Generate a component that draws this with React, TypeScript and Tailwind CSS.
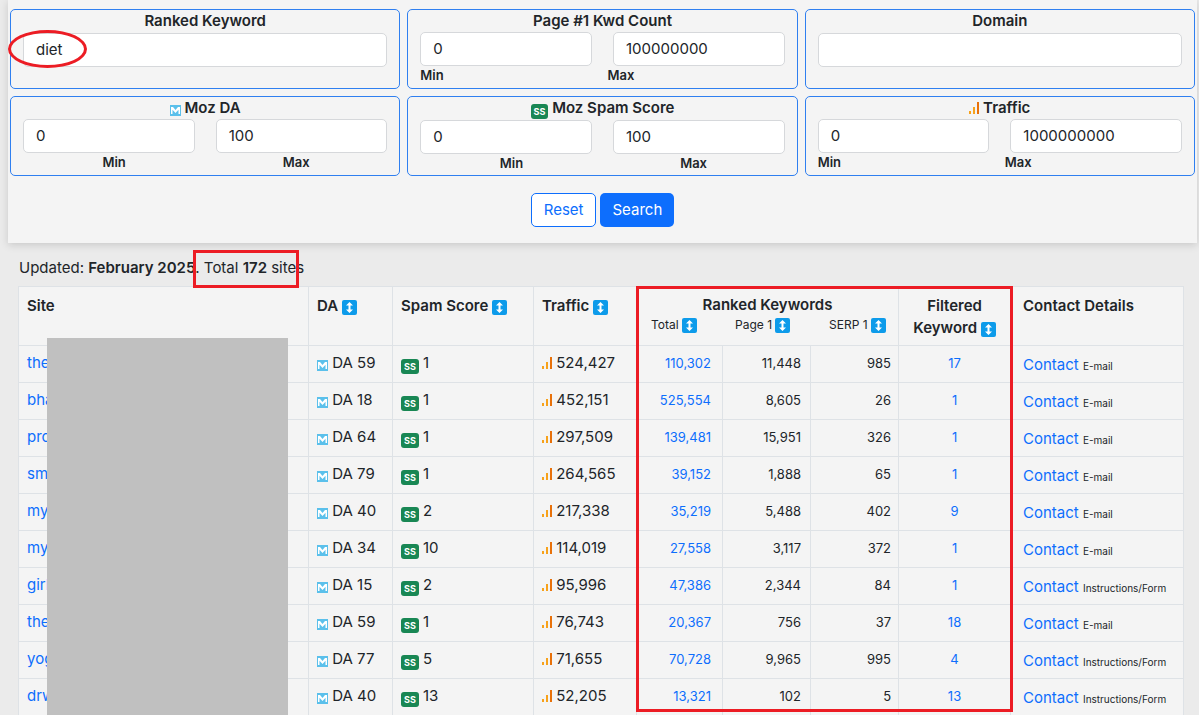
import React from "react";

const Sort = () => (
  <span className="inline-flex h-[15px] w-[15px] items-center justify-center rounded-[2px] bg-[#0d9bea] align-[-2px]">
    <svg width="9" height="11" viewBox="0 0 9 11" fill="white">
      <path d="M4.5 0 L8 3.5 H5.5 V7.5 H8 L4.5 11 L1 7.5 H3.5 V3.5 H1 Z" />
    </svg>
  </span>
);

const MozIcon = () => (
  <span className="inline-flex h-[11px] w-[11px] items-center justify-center bg-[#5bc0eb] align-[-1px]">
    <svg width="9" height="7" viewBox="0 0 9 7" fill="white">
      <path d="M0 7V0h2l2.5 3L7 0h2v7H7.5V2.8L4.5 6 1.5 2.8V7z" />
    </svg>
  </span>
);

const SS = () => (
  <span className="inline-flex h-[15px] items-center rounded-[3px] bg-[#198754] px-[3px] align-[-2px] text-[9px] font-bold leading-none text-white">
    SS
  </span>
);

const Bars = () => (
  <svg width="10" height="12" viewBox="0 0 10 12" className="inline align-[-1px]">
    <rect x="0" y="9" width="2" height="3" fill="#f7a21b" />
    <rect x="4" y="5" width="2" height="7" fill="#f7a21b" />
    <rect x="8" y="0" width="2" height="12" fill="#e8710a" />
  </svg>
);

const Input = ({ v }: { v: string }) => (
  <div className="h-[34px] flex-1 rounded-[5px] border border-[#d6d8db] bg-white px-3 text-[15px] leading-[32px] text-[#212529]">
    {v}
  </div>
);

const Card = ({ title, icon, children }: { title: string; icon?: React.ReactNode; children: React.ReactNode }) => (
  <div className="h-[80px] rounded-[5px] border border-[#2f7ff0] px-3 pt-[1px]">
    <div className="text-center text-[15px] font-semibold leading-[20px] text-[#212529]">
      {icon}
      {icon && " "}
      {title}
    </div>
    {children}
  </div>
);

const MinMax = ({ a, b }: { a: string; b: string }) => (
  <div className="mt-[1px] flex gap-[21px]">
    <Input v={a} />
    <Input v={b} />
  </div>
);

const rows = [
  ["the", 59, 1, "524,427", "110,302", "11,448", "985", "17", "E-mail"],
  ["bha", 18, 1, "452,151", "525,554", "8,605", "26", "1", "E-mail"],
  ["pro", 64, 1, "297,509", "139,481", "15,951", "326", "1", "E-mail"],
  ["sm", 79, 1, "264,565", "39,152", "1,888", "65", "1", "E-mail"],
  ["my", 40, 2, "217,338", "35,219", "5,488", "402", "9", "E-mail"],
  ["my", 34, 10, "114,019", "27,558", "3,117", "372", "1", "E-mail"],
  ["girl", 15, 2, "95,996", "47,386", "2,344", "84", "1", "Instructions/Form"],
  ["the", 59, 1, "76,743", "20,367", "756", "37", "18", "E-mail"],
  ["yog", 77, 5, "71,655", "70,728", "9,965", "995", "4", "Instructions/Form"],
  ["drw", 40, 13, "52,205", "13,321", "102", "5", "13", "Instructions/Form"],
];

export default function App() {
  const td = "border border-[#dee2e6] px-2 whitespace-nowrap";
  return (
    <div className="relative h-[715px] overflow-hidden bg-[#ebebeb] font-[Inter,sans-serif] text-[#212529]">
      <div className="ml-[8px] mr-[2px] bg-[#f4f4f4] px-[2px] pb-[16px] pt-[9px] shadow-[0_2px_8px_rgba(0,0,0,0.15)]">
        <div className="grid grid-cols-3 gap-x-[7px] gap-y-[7px]">
          <Card title="Ranked Keyword">
            <div className="mt-[2px] flex">
              <Input v="diet" />
            </div>
          </Card>
          <Card title="Page #1 Kwd Count">
            <MinMax a="0" b="100000000" />
            <div className="flex text-[13px] font-semibold">
              <span className="flex-1">Min</span>
              <span className="flex-1 pl-[10px]">Max</span>
            </div>
          </Card>
          <Card title="Domain">
            <div className="mt-[2px] flex">
              <Input v="" />
            </div>
          </Card>
          <Card title="Moz DA" icon={<MozIcon />}>
            <MinMax a="0" b="100" />
            <div className="flex text-center text-[13px] font-semibold">
              <span className="flex-1">Min</span>
              <span className="flex-1">Max</span>
            </div>
          </Card>
          <Card title="Moz Spam Score" icon={<SS />}>
            <MinMax a="0" b="100" />
            <div className="flex text-center text-[13px] font-semibold">
              <span className="flex-1">Min</span>
              <span className="flex-1">Max</span>
            </div>
          </Card>
          <Card title="Traffic" icon={<Bars />}>
            <MinMax a="0" b="1000000000" />
            <div className="flex text-[13px] font-semibold">
              <span className="flex-1">Min</span>
              <span className="flex-1 pl-[10px]">Max</span>
            </div>
          </Card>
        </div>
        <div className="mt-[17px] flex justify-center gap-[4px]">
          <button className="h-[34px] rounded-[5px] border border-[#0d6efd] bg-white px-3 text-[15px] text-[#0d6efd]">Reset</button>
          <button className="h-[34px] rounded-[5px] bg-[#0d6efd] px-3 text-[15px] text-white">Search</button>
        </div>
      </div>

      <div className="ml-[19px] mt-[14px] text-[15px]">
        Updated: <b className="font-semibold">February 2025</b>. Total <b className="font-semibold">172</b> sites
      </div>

      <table className="ml-[18px] mt-[6px] w-[1166px] table-fixed border-collapse bg-[#f4f4f4] text-[15px]">
        <colgroup>
          <col className="w-[290px]" />
          <col className="w-[84px]" />
          <col className="w-[141px]" />
          <col className="w-[103px]" />
          <col className="w-[86px]" />
          <col className="w-[88px]" />
          <col className="w-[88px]" />
          <col className="w-[112px]" />
          <col />
        </colgroup>
        <thead>
          <tr className="h-[59px] align-top">
            <th className={`${td} pt-[8px] text-left font-semibold`}>Site</th>
            <th className={`${td} pt-[8px] text-left font-semibold`}>DA <Sort /></th>
            <th className={`${td} pt-[8px] text-left font-semibold`}>Spam Score <Sort /></th>
            <th className={`${td} pt-[8px] text-left font-semibold`}>Traffic <Sort /></th>
            <th colSpan={3} className={`${td} pt-[8px] font-semibold leading-[20px]`}>
              Ranked Keywords
              <div className="flex text-[12px] font-normal">
                <span className="w-[80px] pl-[6px] text-left">Total <Sort /></span>
                <span className="w-[90px] pl-[10px] text-left">Page 1 <Sort /></span>
                <span className="flex-1 pl-[14px] text-left">SERP 1 <Sort /></span>
              </div>
            </th>
            <th className={`${td} pt-[8px] font-semibold leading-[22px]`}>
              Filtered<br />Keyword <Sort />
            </th>
            <th className={`${td} pt-[8px] pl-3 text-left font-semibold`}>Contact Details</th>
          </tr>
        </thead>
        <tbody>
          {rows.map((r, i) => (
            <tr key={i} className="h-[37px]">
              <td className={`${td} text-[#0d6efd]`}>{r[0]}</td>
              <td className={td}><MozIcon /> DA {r[1]}</td>
              <td className={td}><SS /> {r[2]}</td>
              <td className={td}><Bars /> {r[3]}</td>
              <td className={`${td} pr-[11px] text-right text-[13px] text-[#0d6efd]`}>{r[4]}</td>
              <td className={`${td} pr-[9px] text-right text-[13px]`}>{r[5]}</td>
              <td className={`${td} pr-[7px] text-right text-[13px]`}>{r[6]}</td>
              <td className={`${td} text-center text-[13px] text-[#0d6efd]`}>{r[7]}</td>
              <td className={`${td} pl-3 pt-[3px]`}>
                <span className="text-[#0d6efd]">Contact</span>{" "}
                <span className="text-[10px]">{r[8]}</span>
              </td>
            </tr>
          ))}
        </tbody>
      </table>

      {/* annotations */}
      <div className="absolute left-[47px] top-[338px] h-[400px] w-[241px] bg-[#c0c0c0]" />
      <div className="absolute left-[636px] top-[286px] h-[426px] w-[377px] border-[3px] border-[#ec1c24]" />
      <div className="absolute left-[193px] top-[250px] h-[38px] w-[106px] border-[3px] border-[#ec1c24]" />
      <div className="absolute left-[8px] top-[30px] h-[38px] w-[79px] rounded-[50%] border-[3px] border-[#ec1c24]" />
    </div>
  );
}
